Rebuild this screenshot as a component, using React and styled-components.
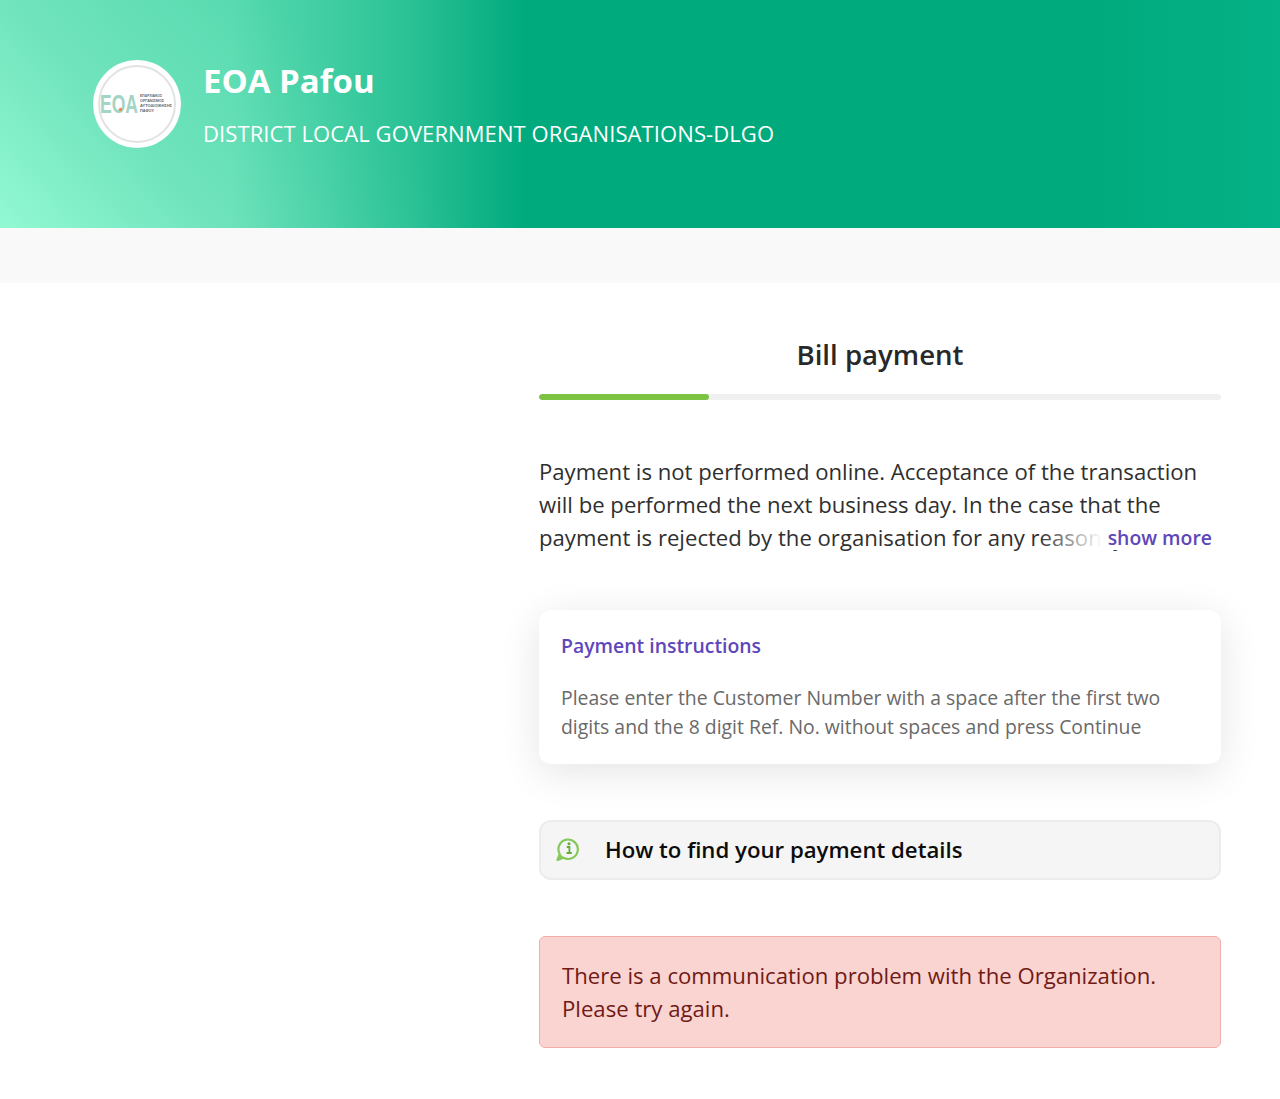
import React from "react";
import styled, { createGlobalStyle } from "styled-components";

const GlobalStyle = createGlobalStyle`
  html, body {
    margin: 0;
    padding: 0;
    background: #fff;
    font-family: "Open Sans", "Liberation Sans", sans-serif;
  }
  * {
    box-sizing: border-box;
  }
`;

const Header = styled.header`
  height: 228px;
  padding: 60px 0 0 93px;
  display: flex;
  gap: 22px;
  background:
    linear-gradient(
      90deg,
      rgba(0, 170, 125, 0) 18%,
      rgba(0, 170, 125, 0.22) 25%,
      rgba(0, 170, 125, 0.5) 32%,
      #00aa7d 41%,
      #00aa7d 85%,
      #05b186 100%
    ),
    linear-gradient(48deg, #92f9d3 0%, #6fe3bc 15%, #55d9ae 32%);
  color: #fff;
`;

const LogoCircle = styled.div`
  width: 88px;
  height: 88px;
  border-radius: 50%;
  background: #fff;
  padding: 5px;
  flex-shrink: 0;
`;

const LogoRing = styled.div`
  width: 100%;
  height: 100%;
  border-radius: 50%;
  border: 2px solid #e2e2e2;
  display: flex;
  align-items: center;
  justify-content: center;
`;

const HeaderText = styled.div`
  display: flex;
  flex-direction: column;
`;

const OrgName = styled.h1`
  margin: -1px 0 0;
  font-size: 33px;
  line-height: 43px;
  font-weight: 700;
`;

const OrgType = styled.p`
  margin: 15px 0 0;
  font-size: 22px;
  line-height: 32px;
  letter-spacing: 0.09px;
  font-weight: 400;
`;

const Band = styled.div`
  height: 55px;
  background: #f9f9f9;
`;

const Main = styled.main`
  display: grid;
  grid-template-columns: 682px;
  padding: 53px 0 51px 539px;
`;

const Title = styled.h2`
  margin: 0;
  text-align: center;
  font-size: 27.6px;
  line-height: 37px;
  font-weight: 600;
  color: #282828;
`;

const Track = styled.div`
  margin-top: 21px;
  height: 6px;
  border-radius: 3px;
  background: #f0f0f0;
  overflow: hidden;
`;

const Progress = styled.div`
  height: 100%;
  width: ${(p) => p.$percent}%;
  border-radius: 3px;
  background: #7cc243;
`;

const Notice = styled.div`
  position: relative;
  margin-top: 55px;
  height: 100px;
  overflow: hidden;
`;

const NoticeText = styled.p`
  margin: 0;
  font-size: 22.13px;
  line-height: 33px;
  color: #2f2f2f;
`;

const Fade = styled.div`
  position: absolute;
  right: 0;
  top: 66px;
  width: 182px;
  height: 29px;
  padding: 0 9px 0 0;
  display: flex;
  justify-content: flex-end;
  background: linear-gradient(90deg, rgba(255, 255, 255, 0) 0%, #fff 63px);
`;

const ShowMore = styled.a`
  font-size: 19.4px;
  line-height: 33px;
  height: 29px;
  font-weight: 600;
  color: #5e46bb;
`;

const Card = styled.section`
  margin-top: 55px;
  padding: 21px 22px 23px;
  border-radius: 12px;
  background: #fff;
  box-shadow: 0 8px 40px rgba(0, 0, 0, 0.11);
`;

const CardTitle = styled.h3`
  margin: 0;
  font-size: 19.4px;
  line-height: 30px;
  font-weight: 600;
  color: #5e46bb;
`;

const CardText = styled.p`
  margin: 22px 0 0;
  font-size: 19.4px;
  line-height: 29px;
  color: #696969;
`;

const HelpRow = styled.button`
  margin-top: 56px;
  height: 60px;
  padding: 0 0 2px 15px;
  display: flex;
  align-items: center;
  gap: 25px;
  border: 2px solid #ececec;
  border-radius: 12px;
  background: #f5f5f5;
  font-family: inherit;
  font-size: 22.2px;
  font-weight: 600;
  color: #0c0c0c;
  text-align: left;
`;

const ErrorBox = styled.div`
  margin-top: 56px;
  padding: 22px 22px 22px;
  border: 1px solid #f2aeab;
  border-radius: 6px;
  background: #fad4d0;
  font-size: 22.15px;
  line-height: 33px;
  color: #701a17;
`;

const EoaLogo = () => (
  <svg width="74" height="24" viewBox="0 0 74 24">
    <text
      x="0"
      y="20.5"
      fontFamily="Liberation Sans, sans-serif"
      fontSize="26"
      fontWeight="700"
      fill="#a3d4c4"
      textLength="38"
      lengthAdjust="spacingAndGlyphs"
    >
      EOA
    </text>
    <circle cx="20.5" cy="17.5" r="1.7" fill="#f08a3c" />
    <g
      fontFamily="Liberation Sans, sans-serif"
      fontSize="4"
      fontWeight="700"
      fill="#666"
    >
      <text x="40" y="5" textLength="22" lengthAdjust="spacingAndGlyphs">
        ΕΠΑΡΧΙΑΚΟΣ
      </text>
      <text x="40" y="10" textLength="24" lengthAdjust="spacingAndGlyphs">
        ΟΡΓΑΝΙΣΜΟΣ
      </text>
      <text x="40" y="15" textLength="32" lengthAdjust="spacingAndGlyphs">
        ΑΥΤΟΔΙΟΙΚΗΣΗΣ
      </text>
      <text x="40" y="20" textLength="14" lengthAdjust="spacingAndGlyphs">
        ΠΑΦΟΥ
      </text>
    </g>
  </svg>
);

const InfoBubbleIcon = () => (
  <svg width="24" height="24" viewBox="0 0 24 24" fill="none" stroke="#86c95a">
    <path
      d="M1.5 23 L3.7 17 A9.7 9.7 0 1 1 7.4 20.7 Z"
      strokeWidth="2.2"
      strokeLinejoin="round"
    />
    <path d="M1.5 23 L3.7 17 L7.4 20.7 Z" fill="#86c95a" strokeWidth="1" />
    <circle cx="13" cy="6.8" r="1.5" fill="#5fae33" stroke="none" />
    <path
      d="M10.8 10 H13.4 V15.8 M10.6 16 H15.8"
      stroke="#5fae33"
      strokeWidth="1.8"
    />
  </svg>
);

const App = () => {
  return (
    <>
      <GlobalStyle />
      <Header>
        <LogoCircle>
          <LogoRing>
            <EoaLogo />
          </LogoRing>
        </LogoCircle>
        <HeaderText>
          <OrgName>EOA Pafou</OrgName>
          <OrgType>DISTRICT LOCAL GOVERNMENT ORGANISATIONS-DLGO</OrgType>
        </HeaderText>
      </Header>
      <Band />
      <Main>
        <Title>Bill payment</Title>
        <Track>
          <Progress $percent={24.9} />
        </Track>
        <Notice>
          <NoticeText>
            Payment is not performed online. Acceptance of the transaction will
            be performed the next business day. In the case that the payment is
            rejected by the organisation for any reason, you will be informed.
          </NoticeText>
          <Fade>
            <ShowMore>show more</ShowMore>
          </Fade>
        </Notice>
        <Card>
          <CardTitle>Payment instructions</CardTitle>
          <CardText>
            Please enter the Customer Number with a space after the first two
            digits and the 8 digit Ref. No. without spaces and press Continue
          </CardText>
        </Card>
        <HelpRow>
          <InfoBubbleIcon />
          How to find your payment details
        </HelpRow>
        <ErrorBox>
          There is a communication problem with the Organization.
          <br />
          Please try again.
        </ErrorBox>
      </Main>
    </>
  );
};

export default App;
